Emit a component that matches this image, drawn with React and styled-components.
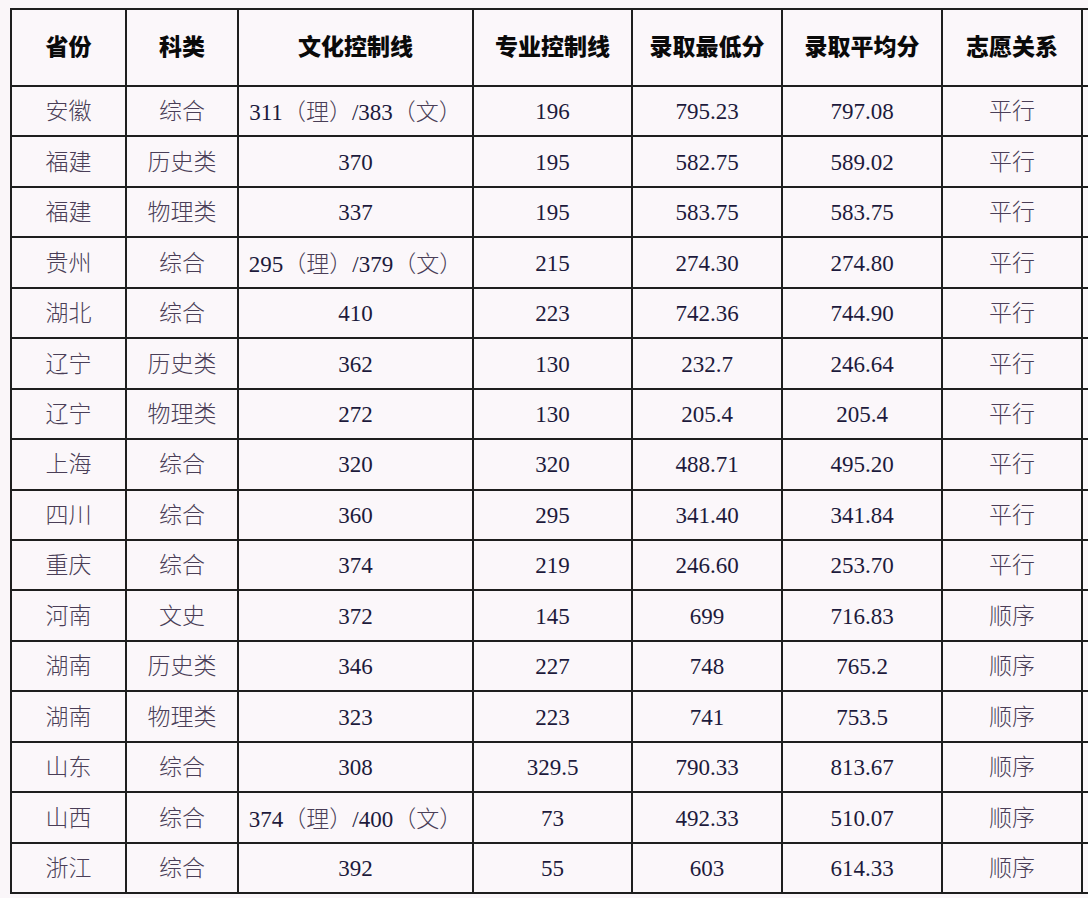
import React from "react";
import styled, { createGlobalStyle } from "styled-components";

const Global = createGlobalStyle`
  html, body { margin: 0; padding: 0; background: #f7f3f6; overflow: hidden; }
  body { width: 1088px; height: 898px; }
`;

const Page = styled.div`
  width: 1088px;
  height: 898px;
  overflow: hidden;
  padding: 8px 0 0 10px;
  box-sizing: border-box;
  background: #faf6f9;
`;

const Table = styled.table`
  border-collapse: collapse;
  table-layout: fixed;
  width: 1120px;
  background: #fbf7fa;
`;

const Head = styled.th`
  border: 2px solid #1e1e1e;
  height: 77px;
  padding: 0 0 3px;
  line-height: 1.2;
  font-family: "Noto Sans CJK SC", sans-serif;
  font-weight: 900;
  font-size: 23px;
  color: #0a0a0a;
  text-align: center;
  vertical-align: middle;
  box-sizing: border-box;
`;

const Cell = styled.td`
  border: 2px solid #1e1e1e;
  height: 50.45px;
  padding: 2px 0 0;
  box-sizing: border-box;
  line-height: 1.2;
  text-align: center;
  vertical-align: middle;
  font-family: "Liberation Serif", "Noto Sans CJK SC", serif;
  font-weight: ${(p) => (p.$cjk ? 300 : 400)};
  font-size: 23px;
  color: ${(p) => (p.$cjk ? "#4a3e57" : "#1d1a3c")};
  white-space: nowrap;
`;

const Paren = styled.span`
  font-family: "Noto Sans CJK SC", sans-serif;
  font-weight: 300;
  color: #4a3e57;
  font-size: 23px;
`;

const widths = [115, 112, 235, 159, 150, 160, 140, 60];
const headers = ["省份", "科类", "文化控制线", "专业控制线", "录取最低分", "录取平均分", "志愿关系", ""];

const rows = [
  ["安徽", "综合", ["311", "383"], "196", "795.23", "797.08", "平行"],
  ["福建", "历史类", "370", "195", "582.75", "589.02", "平行"],
  ["福建", "物理类", "337", "195", "583.75", "583.75", "平行"],
  ["贵州", "综合", ["295", "379"], "215", "274.30", "274.80", "平行"],
  ["湖北", "综合", "410", "223", "742.36", "744.90", "平行"],
  ["辽宁", "历史类", "362", "130", "232.7", "246.64", "平行"],
  ["辽宁", "物理类", "272", "130", "205.4", "205.4", "平行"],
  ["上海", "综合", "320", "320", "488.71", "495.20", "平行"],
  ["四川", "综合", "360", "295", "341.40", "341.84", "平行"],
  ["重庆", "综合", "374", "219", "246.60", "253.70", "平行"],
  ["河南", "文史", "372", "145", "699", "716.83", "顺序"],
  ["湖南", "历史类", "346", "227", "748", "765.2", "顺序"],
  ["湖南", "物理类", "323", "223", "741", "753.5", "顺序"],
  ["山东", "综合", "308", "329.5", "790.33", "813.67", "顺序"],
  ["山西", "综合", ["374", "400"], "73", "492.33", "510.07", "顺序"],
  ["浙江", "综合", "392", "55", "603", "614.33", "顺序"],
];

function Culture({ v }) {
  if (Array.isArray(v)) {
    return (
      <>
        {v[0]}
        <Paren>（理）</Paren>/{v[1]}
        <Paren>（文）</Paren>
      </>
    );
  }
  return v;
}

export default function App() {
  return (
    <Page>
      <Global />
      <Table>
        <colgroup>
          {widths.map((w, i) => (
            <col key={i} style={{ width: w }} />
          ))}
        </colgroup>
        <thead>
          <tr>
            {headers.map((h, i) => (
              <Head key={i}>{h}</Head>
            ))}
          </tr>
        </thead>
        <tbody>
          {rows.map((r, i) => (
            <tr key={i}>
              <Cell $cjk>{r[0]}</Cell>
              <Cell $cjk>{r[1]}</Cell>
              <Cell>
                <Culture v={r[2]} />
              </Cell>
              <Cell>{r[3]}</Cell>
              <Cell>{r[4]}</Cell>
              <Cell>{r[5]}</Cell>
              <Cell $cjk>{r[6]}</Cell>
              <Cell />
            </tr>
          ))}
        </tbody>
      </Table>
    </Page>
  );
}
